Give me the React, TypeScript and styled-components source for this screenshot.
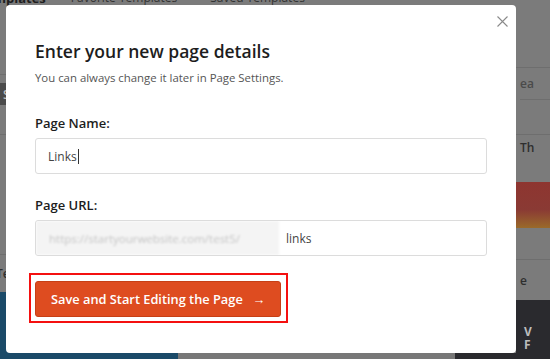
import styled, { createGlobalStyle } from 'styled-components';

const GlobalStyle = createGlobalStyle`
  html, body {
    margin: 0;
    padding: 0;
    background: #7b7b7b;
  }
  * {
    box-sizing: border-box;
  }
`;

const Page = styled.div`
  position: relative;
  width: 550px;
  height: 359px;
  overflow: hidden;
  background: #7b7b7b;
  font-family: 'Open Sans', 'Noto Sans', sans-serif;
  display: flex;
  flex-direction: column;
`;

/* --- dimmed page behind the dialog --- */

const TabBar = styled.div`
  height: 20px;
  flex: none;
  display: flex;
  gap: 33px;
  align-items: flex-start;
  margin-top: -11px;
`;

const Tab = styled.span<{ $active?: boolean }>`
  font-size: ${(p) => (p.$active ? 13 : 12)}px;
  line-height: 18px;
  font-weight: ${(p) => (p.$active ? 700 : 400)};
  color: ${(p) => (p.$active ? '#1e1e1e' : '#333')};
  white-space: nowrap;
  &:first-child {
    margin-left: -22px;
    margin-right: -8px;
  }
`;

const BackBody = styled.div`
  flex: 1;
  display: flex;
  justify-content: space-between;
`;

const SideStrip = styled.div<{ $width: number }>`
  width: ${(p) => p.$width}px;
  display: flex;
  flex-direction: column;
  overflow: hidden;
`;

const StripBlock = styled.div<{ $h: number; $bg?: string; $line?: boolean }>`
  height: ${(p) => p.$h}px;
  flex: none;
  background: ${(p) => p.$bg || 'transparent'};
  border-bottom: ${(p) => (p.$line ? '1px solid #6e6e6e' : 'none')};
  font-size: 12px;
  font-weight: 600;
  color: #2e2e2e;
  display: flex;
  align-items: center;
  white-space: nowrap;
`;

const StripFill = styled.div<{ $bg: string }>`
  flex: 1;
  background: ${(p) => p.$bg};
  color: #bdbdbd;
  font-size: 12px;
  font-weight: 700;
  display: flex;
  flex-direction: column;
  justify-content: flex-end;
  line-height: 13px;
  padding-bottom: 2px;
`;

const BottomBand = styled.div`
  height: 6px;
  flex: none;
  display: flex;
`;

const BandPart = styled.div<{ $w: number; $bg: string }>`
  width: ${(p) => p.$w}px;
  flex: none;
  background: ${(p) => p.$bg};
`;

/* --- dialog --- */

const Dialog = styled.div`
  position: absolute;
  left: 6px;
  top: 5px;
  width: 510px;
  height: 348px;
  background: #fff;
  border-radius: 4px;
  padding: 34px 29px 0 29px;
  display: flex;
  flex-direction: column;
  align-items: flex-start;
`;

const CloseButton = styled.button`
  position: absolute;
  top: 5px;
  right: 3px;
  width: 22px;
  height: 22px;
  padding: 0;
  border: none;
  background: none;
  display: flex;
  align-items: center;
  justify-content: center;
  cursor: pointer;
`;

const Title = styled.h2`
  margin: 0;
  font-size: 17.5px;
  line-height: 24px;
  font-weight: 600;
  color: #1d1d1d;
`;

const Subtitle = styled.p`
  margin: 7px 0 0 0;
  font-size: 11.4px;
  line-height: 16px;
  color: #555;
`;

const Label = styled.label<{ $top: number }>`
  margin-top: ${(p) => p.$top}px;
  font-size: 13px;
  line-height: 20px;
  font-weight: 600;
  color: #1d1d1d;
`;

const Field = styled.div`
  margin-top: 5px;
  width: 452px;
  height: 36px;
  border: 1px solid #dcdcdc;
  border-radius: 3px;
  display: flex;
  align-items: center;
  overflow: hidden;
`;

const FieldText = styled.span`
  padding-left: 12px;
  font-size: 12px;
  color: #444;
  display: flex;
  align-items: center;
`;

const Caret = styled.span`
  display: inline-block;
  width: 1px;
  height: 15px;
  background: #333;
  margin-left: 1px;
`;

const UrlPrefix = styled.div`
  width: 243px;
  height: 100%;
  flex: none;
  background: #f4f4f4;
  display: flex;
  align-items: center;
  padding-left: 13px;
  font-size: 11.5px;
  color: #c4c4c4;
  filter: blur(1.3px);
  white-space: nowrap;
`;

const UrlSlug = styled.span`
  padding-left: 7px;
  font-size: 12px;
  color: #444;
`;

const Highlight = styled.div`
  margin-top: 17px;
  margin-left: -6px;
  border: 2px solid #f41010;
  padding: 6px 5px 4px 4px;
`;

const PrimaryButton = styled.button`
  height: 36px;
  padding: 0 14px 0 15px;
  background: #de4c20;
  border: 1px solid #c63f16;
  border-radius: 3px;
  color: #fff;
  font-family: 'Open Sans', 'Noto Sans', sans-serif;
  font-size: 12.8px;
  font-weight: 600;
  display: flex;
  align-items: center;
  gap: 10px;
  cursor: pointer;
`;

export default function App() {
  return (
    <>
      <GlobalStyle />
      <Page>
        <TabBar>
          <Tab $active>Templates</Tab>
          <Tab>Favorite Templates</Tab>
          <Tab>Saved Templates</Tab>
        </TabBar>
        <BackBody>
          <SideStrip $width={20}>
            <StripBlock $h={66} $line />
            <StripBlock $h={8} />
            <StripBlock $h={22} $bg="#4b4b4b" style={{ color: '#bdbdbd', paddingLeft: 3 }}>S</StripBlock>
            <StripBlock $h={30} $line />
            <StripBlock $h={120} $line />
            <StripBlock $h={37} style={{ marginLeft: -4 }}>Te</StripBlock>
            <StripFill $bg="#1a4a68" />
          </SideStrip>
          <SideStrip $width={34}>
            <StripBlock $h={59} $line />
            <StripBlock $h={32} $line style={{ marginLeft: 4, color: '#4a4a4a' }}>ea</StripBlock>
            <StripBlock $h={35} $line />
            <StripBlock $h={25} style={{ marginLeft: 4 }}>Th</StripBlock>
            <StripBlock $h={22} />
            <StripBlock $h={46} $bg="linear-gradient(#8e3530 0%, #8a3a34 60%, #9a6a2a 100%)" />
            <StripBlock $h={32} $line />
            <StripBlock $h={40} style={{ marginLeft: 4 }}>e</StripBlock>
            <StripFill $bg="#2a2a2e">
              <span style={{ marginLeft: 8 }}>V</span>
              <span style={{ marginLeft: 8 }}>F</span>
            </StripFill>
          </SideStrip>
        </BackBody>
        <BottomBand>
          <BandPart $w={178} $bg="#1a4a68" />
          <BandPart $w={277} $bg="#777" />
          <BandPart $w={95} $bg="#2a2a2e" />
        </BottomBand>

        <Dialog>
          <CloseButton aria-label="Close">
            <svg width="11" height="11" viewBox="0 0 11 11">
              <path d="M0.5 0.5 L10.5 10.5 M10.5 0.5 L0.5 10.5" stroke="#8a8a8a" strokeWidth="1.1" fill="none" />
            </svg>
          </CloseButton>
          <Title>Enter your new page details</Title>
          <Subtitle>You can always change it later in Page Settings.</Subtitle>

          <Label $top={27}>Page Name:</Label>
          <Field>
            <FieldText>
              Links
              <Caret />
            </FieldText>
          </Field>

          <Label $top={21}>Page URL:</Label>
          <Field>
            <UrlPrefix>https://startyourwebsite.com/test5/</UrlPrefix>
            <UrlSlug>links</UrlSlug>
          </Field>

          <Highlight>
            <PrimaryButton>
              Save and Start Editing the Page
              <span>→</span>
            </PrimaryButton>
          </Highlight>
        </Dialog>
      </Page>
    </>
  );
}
